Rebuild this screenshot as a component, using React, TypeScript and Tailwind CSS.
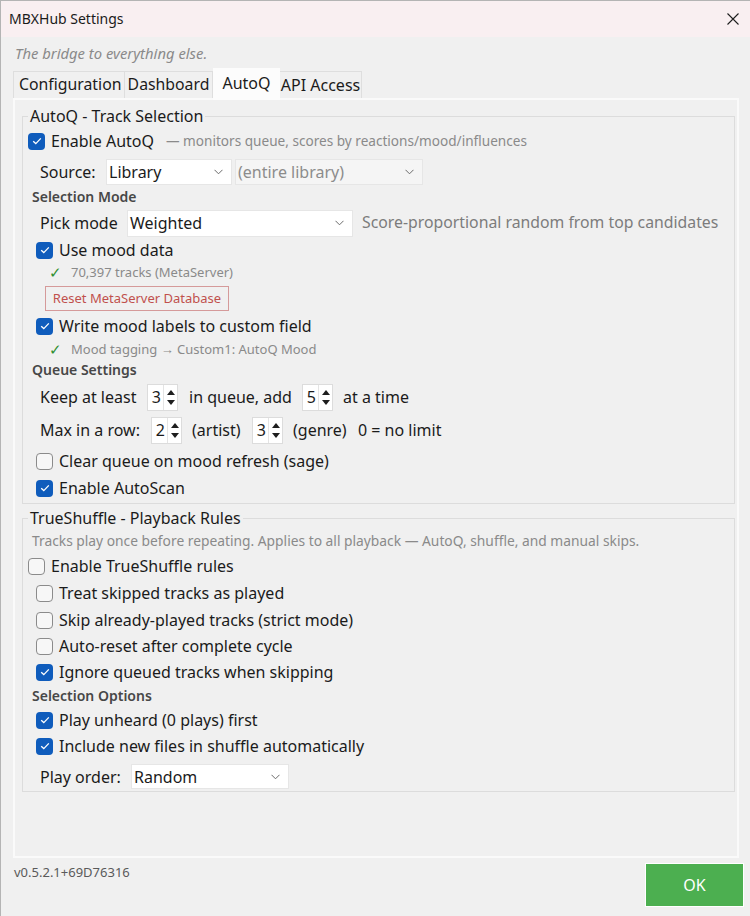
import React from "react";

type CheckProps = { on?: boolean };

function Check({ on }: CheckProps) {
  if (on) {
    return (
      <span className="flex h-[17px] w-[17px] shrink-0 items-center justify-center rounded-[4px] bg-[#0f5cbc]">
        <svg width="10" height="8" viewBox="0 0 10 8">
          <path d="M1.2 4.2 L3.8 6.6 L8.8 1.4" fill="none" stroke="white" strokeWidth="1.3" />
        </svg>
      </span>
    );
  }
  return <span className="h-[17px] w-[17px] shrink-0 rounded-[4px] border border-[#8b8b8b] bg-[#f7f7f7]" />;
}

function CheckRow({ on, label, className }: { on?: boolean; label: string; className: string }) {
  return (
    <div className={`flex items-center gap-[6px] text-[16px] text-[#1b1b1b] ${className}`}>
      <Check on={on} />
      <span className="leading-none">{label}</span>
    </div>
  );
}

function Chevron() {
  return (
    <svg width="9" height="6" viewBox="0 0 9 6" className="shrink-0">
      <path d="M0.5 0.8 L4.5 4.8 L8.5 0.8" fill="none" stroke="#6b6b6b" strokeWidth="1" />
    </svg>
  );
}

function Combo({ text, className }: { text: string; className: string }) {
  return (
    <div className={`flex items-center justify-between border border-[#e6e6e6] pl-[2px] pr-[8px] text-[16px] ${className}`}>
      <span className="leading-none">{text}</span>
      <Chevron />
    </div>
  );
}

function Spin({ v }: { v: number }) {
  return (
    <div className="flex h-[27px] w-[31px] shrink-0 border border-[#dcdcdc] bg-white">
      <span className="flex w-[13px] items-center justify-end text-[16px] leading-none">{v}</span>
      <div className="ml-[2px] flex flex-1 flex-col items-center justify-center gap-[5px] border-l border-[#e4e4e4]">
        <svg width="8" height="5" viewBox="0 0 8 5">
          <path d="M0 5 L4 0 L8 5Z" fill="#1e1e1e" />
        </svg>
        <svg width="8" height="5" viewBox="0 0 8 5">
          <path d="M0 0 L4 5 L8 0Z" fill="#1e1e1e" />
        </svg>
      </div>
    </div>
  );
}

function Note({ text, className }: { text: string; className: string }) {
  return (
    <div className={`flex items-center pl-[21px] text-[13px] text-[#8a8a8a] ${className}`}>
      <span className="w-[22px] text-[15px] leading-none text-[#2f8f2f]">✓</span>
      <span className="leading-none">{text}</span>
    </div>
  );
}

function Heading({ text, className }: { text: string; className: string }) {
  return (
    <div className={`flex items-center pl-[4px] text-[14px] font-semibold text-[#474747] ${className}`}>
      <span className="leading-none">{text}</span>
    </div>
  );
}

export default function App() {
  return (
    <div className="flex h-[916px] w-[750px] flex-col overflow-hidden border-l border-t border-[#b4b4b4] bg-[#f0f0f0] font-['Noto_Sans','Open_Sans',sans-serif] text-[#1b1b1b]">
      {/* title bar */}
      <div className="flex h-[36px] shrink-0 items-center justify-between bg-[#f9eff1] pl-[8px] pr-[11px]">
        <span className="text-[14px] leading-none">MBXHub Settings</span>
        <svg width="12" height="12" viewBox="0 0 12 12">
          <path d="M0.5 0.5 L11.5 11.5 M11.5 0.5 L0.5 11.5" stroke="#1e1e1e" strokeWidth="1.1" />
        </svg>
      </div>

      <div className="flex h-[32px] items-center pl-[14px] text-[14.8px] italic text-[#8a8a8a]">
        <span className="leading-none">The bridge to everything else.</span>
      </div>

      {/* tabs */}
      <div className="flex h-[29px] items-end pl-[12px]">
        <div className="flex h-[27px] w-[112px] items-center border border-b-0 border-[#dedede] pl-[5px] text-[15.8px]">
          <span className="leading-none">Configuration</span>
        </div>
        <div className="flex h-[27px] w-[88px] items-center justify-center border-r border-t border-[#dedede] text-[15.8px]">
          <span className="leading-none">Dashboard</span>
        </div>
        <div className="z-10 -mb-[2px] flex h-[32px] w-[67px] items-center justify-center bg-[#fcfcfc] pb-[3px] text-[16px]">
          <span className="leading-none">AutoQ</span>
        </div>
        <div className="flex h-[27px] w-[82px] items-center justify-center border-r border-t border-[#dedede] text-[16px]">
          <span className="leading-none">API Access</span>
        </div>
      </div>

      {/* tab panel */}
      <div className="ml-[12px] h-[760px] w-[726px] border-2 border-[#fafafa] pl-[7px] pr-[2px]">
        <fieldset className="mt-[5px] border border-[#dcdcdc] px-[5px]">
          <legend className="px-[2px] text-[16px] leading-[22px]">AutoQ - Track Selection</legend>
          <div className="flex h-[28px] items-center gap-[6px]">
            <Check on />
            <span className="text-[16px] leading-none">Enable AutoQ</span>
            <span className="ml-[6px] text-[13.6px] leading-none text-[#8a8a8a]">— monitors queue, scores by reactions/mood/influences</span>
          </div>
          <div className="flex h-[34px] items-center pl-[12px] text-[16px]">
            <span className="w-[66px] leading-none">Source:</span>
            <Combo text="Library" className="h-[26px] w-[126px] bg-white" />
            <Combo text="(entire library)" className="ml-[3px] h-[26px] w-[188px] bg-[#f5f5f5] text-[#8c8c8c]" />
          </div>
          <Heading text="Selection Mode" className="h-[16px]" />
          <div className="flex h-[36px] items-center pl-[12px] text-[16px]">
            <span className="w-[87px] leading-none">Pick mode</span>
            <Combo text="Weighted" className="h-[27px] w-[226px] bg-white" />
            <span className="ml-[9px] text-[15.8px] leading-none text-[#7c7c7c]">Score-proportional random from top candidates</span>
          </div>
          <CheckRow on label="Use mood data" className="h-[18px] pl-[8px]" />
          <Note text="70,397 tracks (MetaServer)" className="h-[26px]" />
          <div className="flex h-[26px] items-center pl-[17px]">
            <div className="flex h-[25px] w-[184px] items-center justify-center border border-[#d59a9a] text-[13px] text-[#c0504d]">
              <span className="leading-none">Reset MetaServer Database</span>
            </div>
          </div>
          <CheckRow on label="Write mood labels to custom field" className="h-[30px] pl-[8px]" />
          <Note text="Mood tagging → Custom1: AutoQ Mood" className="h-[16px]" />
          <Heading text="Queue Settings" className="h-[26px]" />
          <div className="flex h-[28px] items-center pl-[12px] text-[16px]">
            <span className="w-[107px] leading-none">Keep at least</span>
            <Spin v={3} />
            <span className="ml-[11px] w-[113px] leading-none">in queue, add</span>
            <Spin v={5} />
            <span className="ml-[10px] leading-none">at a time</span>
          </div>
          <div className="flex h-[38px] items-center pl-[12px] text-[16px]">
            <span className="w-[111px] leading-none">Max in a row:</span>
            <Spin v={2} />
            <span className="ml-[10px] w-[60px] leading-none">(artist)</span>
            <Spin v={3} />
            <span className="ml-[10px] w-[65px] leading-none">(genre)</span>
            <span className="leading-none">0 = no limit</span>
          </div>
          <CheckRow label="Clear queue on mood refresh (sage)" className="h-[24px] pl-[8px]" />
          <CheckRow on label="Enable AutoScan" className="h-[30px] pl-[8px]" />
        </fieldset>

        <fieldset className="mt-[3px] border border-[#dcdcdc] px-[5px]">
          <legend className="px-[2px] text-[16px] leading-[22px]">TrueShuffle - Playback Rules</legend>
          <div className="flex h-[24px] items-center pl-[4px] text-[13.8px] text-[#8a8a8a]">
            <span className="leading-none">Tracks play once before repeating. Applies to all playback — AutoQ, shuffle, and manual skips.</span>
          </div>
          <CheckRow label="Enable TrueShuffle rules" className="h-[26px]" />
          <CheckRow label="Treat skipped tracks as played" className="h-[28px] pl-[8px]" />
          <CheckRow label="Skip already-played tracks (strict mode)" className="h-[26px] pl-[8px]" />
          <CheckRow label="Auto-reset after complete cycle" className="h-[26px] pl-[8px]" />
          <CheckRow on label="Ignore queued tracks when skipping" className="h-[26px] pl-[8px]" />
          <Heading text="Selection Options" className="h-[22px]" />
          <CheckRow on label="Play unheard (0 plays) first" className="h-[26px] pl-[8px]" />
          <CheckRow on label="Include new files in shuffle automatically" className="h-[26px] pl-[8px]" />
          <div className="flex h-[32px] items-start pl-[12px] pt-[5px] text-[16px]">
            <span className="flex h-[25px] w-[91px] items-center leading-none">Play order:</span>
            <Combo text="Random" className="h-[25px] w-[158px] bg-white" />
          </div>
        </fieldset>
      </div>

      {/* footer */}
      <div className="flex flex-1 items-start justify-between pl-[13px] pr-[6px]">
        <span className="mt-[8px] text-[13px] leading-none text-[#5a5a5a]">v0.5.2.1+69D76316</span>
        <div className="mt-[5px] flex h-[44px] w-[99px] items-center justify-center border border-white bg-[#4caf50] text-[16px] text-white">
          <span className="leading-none">OK</span>
        </div>
      </div>
    </div>
  );
}
